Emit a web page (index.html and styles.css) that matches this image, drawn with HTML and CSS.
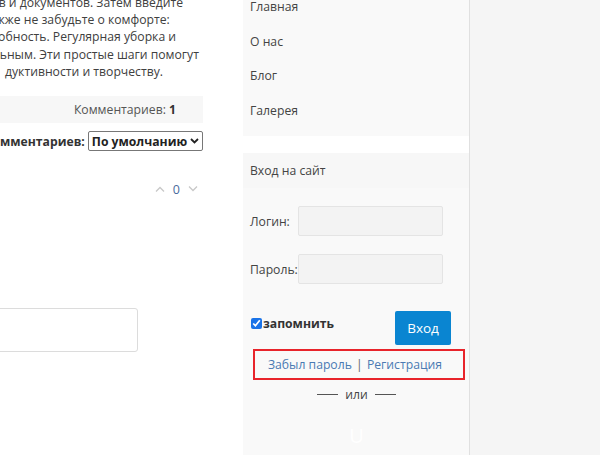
FILE: index.html
```html
<!DOCTYPE html>
<html lang="ru">
<head>
<meta charset="utf-8">
<title>Комментарии</title>
<link rel="stylesheet" href="styles.css">
</head>
<body>
<div class="page">
  <main class="main">
    <p class="intro">ков и документов. Затем введите<br>Также не забудьте о комфорте:<br>удобность. Регулярная уборка и<br>ильным. Эти простые шаги помогут<br><span class="ind">дуктивности и творчеству.</span></p>
    <div class="count-bar">Комментариев: <b>1</b></div>
    <div class="sort-row">
      <span class="sort-label">мментариев:</span>
      <div class="select"><span>По умолчанию</span>
        <svg class="sel-arrow" width="9" height="6" viewBox="0 0 9 6"><path d="M1 1 L4.5 4.5 L8 1" fill="none" stroke="#222" stroke-width="1.8"/></svg>
      </div>
    </div>
    <div class="vote">
      <svg width="10" height="6" viewBox="0 0 10 6"><path d="M1 5.5 L5 1.5 L9 5.5" fill="none" stroke="#c8c8c8" stroke-width="1.3"/></svg>
      <span class="vote-num">0</span>
      <svg width="10" height="6" viewBox="0 0 10 6"><path d="M1 0.5 L5 4.5 L9 0.5" fill="none" stroke="#c8c8c8" stroke-width="1.3"/></svg>
    </div>
    <div class="reply-box"></div>
  </main>
  <aside class="sidebar">
    <nav class="widget menu">
      <a class="menu-item">Главная</a>
      <a class="menu-item">О нас</a>
      <a class="menu-item">Блог</a>
      <a class="menu-item">Галерея</a>
    </nav>
    <section class="widget login">
      <div class="login-title">Вход на сайт</div>
      <div class="field"><span class="lbl">Логин:</span><span class="inp"></span></div>
      <div class="field"><span class="lbl">Пароль:</span><span class="inp"></span></div>
      <div class="remember-row">
        <label class="remember"><input type="checkbox" checked class="chk">запомнить</label>
        <span class="btn">Вход</span>
      </div>
      <div class="links"><a class="lnk">Забыл пароль</a> <span class="sep">|</span> <a class="lnk">Регистрация</a></div>
      <div class="or"><span class="line"></span><span>или</span><span class="line"></span></div>
      <div class="social">U</div>
    </section>
  </aside>
  <div class="rightbg"></div>
</div>
</body>
</html>
```
FILE: styles.css
```css
html, body {
  margin: 0;
  padding: 0;
  background: #fff;
}
body {
  font-family: "Open Sans", "Noto Sans", sans-serif;
  font-size: 12.2px;
  color: #444;
  width: 600px;
  height: 455px;
  overflow: hidden;
}
.page {
  display: flex;
  height: 455px;
}
.main {
  width: 203px;
  flex: none;
  margin-right: 40px;
}
.intro {
  margin: -6px 0 0 -15px;
  line-height: 17.2px;
  white-space: nowrap;
  color: #404040;
}
.ind {
  padding-left: 20px;
}
.count-bar {
  margin-top: 16px;
  height: 27px;
  line-height: 27px;
  background: #f7f7f7;
  text-align: right;
  padding-right: 27px;
  color: #555;
}
.count-bar b {
  color: #333;
}
.sort-row {
  margin-top: 8px;
  display: flex;
  justify-content: flex-end;
  align-items: center;
  gap: 3px;
  height: 20px;
  font-weight: bold;
  color: #333;
  white-space: nowrap;
}
.select {
  height: 18px;
  border: 1px solid #777;
  border-radius: 2px;
  display: flex;
  align-items: center;
  justify-content: space-between;
  box-sizing: content-box;
  width: 112px;
  padding: 0 3px 0 3px;
  color: #222;
}
.vote {
  margin-top: 30px;
  display: flex;
  justify-content: flex-end;
  align-items: center;
  gap: 8px;
  padding-right: 5px;
  height: 16px;
}
.vote-num {
  color: #4a6a9c;
  font-size: 12.5px;
}
.reply-box {
  margin-top: 111px;
  margin-left: -10px;
  width: 146px;
  height: 42px;
  border: 1px solid #dcdcdc;
  border-radius: 3px;
}
.sidebar {
  width: 226px;
  flex: none;
  border-right: 1px solid #e0e0e0;
  display: flex;
  flex-direction: column;
}
.widget {
  background: #f9f9f9;
}
.menu {
  height: 136px;
  margin-bottom: 17px;
  padding: 0 0 0 7px;
  box-sizing: border-box;
  display: flex;
  flex-direction: column;
}
.menu-item {
  display: block;
  height: 34.6px;
  line-height: 20px;
  padding-top: 7.3px;
  box-sizing: border-box;
  color: #444;
}
.menu-item:first-child {
  margin-top: -10px;
}
.login {
  flex: 1;
}
.login-title {
  height: 35px;
  line-height: 35px;
  padding-left: 7px;
  background: #f7f7f7;
}
.field {
  display: flex;
  align-items: center;
  padding-left: 7px;
  margin-top: 18px;
}
.field:first-of-type {
  margin-top: 19px;
}
.lbl {
  width: 48px;
  flex: none;
  white-space: nowrap;
}
.inp {
  display: block;
  width: 143px;
  height: 28px;
  background: #f3f3f3;
  border: 1px solid #e4e4e4;
  border-radius: 2px;
}
.remember-row {
  display: flex;
  justify-content: space-between;
  align-items: flex-start;
  margin-top: 27px;
  padding: 0 18px 0 8px;
}
.remember {
  display: flex;
  align-items: center;
  font-weight: bold;
  color: #333;
  margin-top: 4px;
}
.chk {
  width: 11px;
  height: 11px;
  margin: 0 1px 0 0;
  accent-color: #1a73e8;
}
.btn {
  display: block;
  width: 56px;
  height: 34px;
  line-height: 34px;
  text-align: center;
  background: #0a85d1;
  color: #fff;
  font-size: 13.5px;
  border-radius: 2px;
}
.links {
  margin: 4px 4px 0 10px;
  height: 27px;
  line-height: 27px;
  border: 2px solid #e8242b;
  text-align: center;
  padding-right: 8px;
  color: #666;
}
.lnk {
  color: #4a7ab3;
}
.sep {
  color: #666;
  padding: 0 1px;
}
.or {
  display: flex;
  justify-content: center;
  align-items: center;
  gap: 7px;
  margin-top: 5px;
  height: 18px;
  color: #444;
  padding-left: 1px;
}
.line {
  display: block;
  width: 21px;
  height: 1px;
  background: #555;
}
.social {
  margin-top: 23px;
  text-align: center;
  color: #fff;
  font-size: 20px;
  line-height: 20px;
  padding-left: 1px;
}
.rightbg {
  flex: 1;
  background: #f5f5f5;
}
```
